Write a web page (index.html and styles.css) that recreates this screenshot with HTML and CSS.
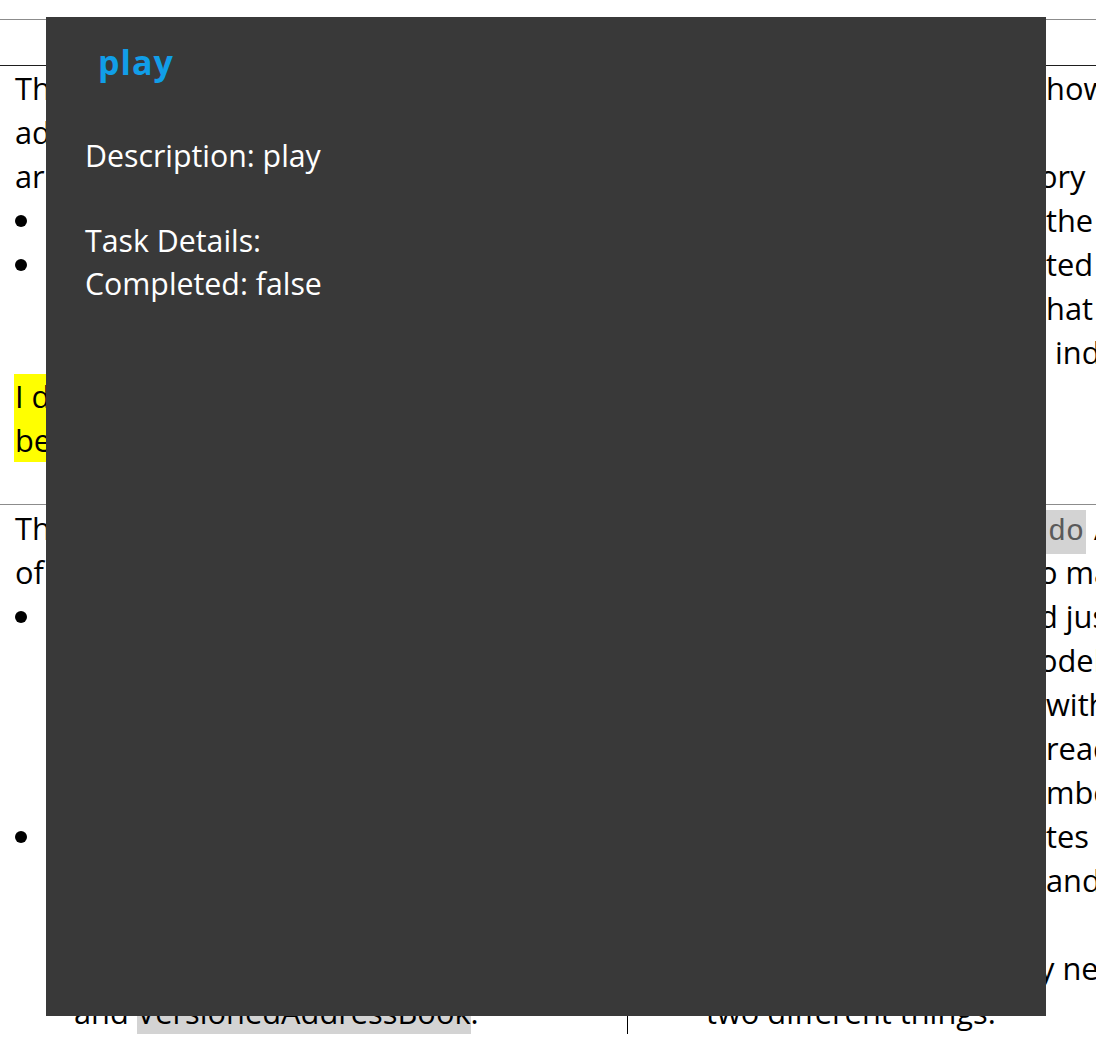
FILE: index.html
```html
<!DOCTYPE html>
<html lang="en">
<head>
<meta charset="utf-8">
<title>Task popup</title>
<link rel="stylesheet" href="styles.css">
</head>
<body>
<div class="doc">
  <div class="table">
    <div class="hrow"></div>

    <div class="row row1">
      <div class="cell left">
        <div class="ln">The Model stores the address book data in memory.</div>
        <div class="ln">address book and the task list are both held here and</div>
        <div class="ln">are exposed to the UI through unmodifiable lists:</div>
        <div class="ln b"><span class="dot"></span>UniqueTaskList stores all tasks of the app</div>
        <div class="ln b"><span class="dot"></span>Task objects hold a description and a flag that</div>
        <div class="ln ind">shows whether the task is completed.</div>
        <div class="ln"></div>
        <div class="ln"><span class="hl">I did not change the structure of the Model, as the task</span></div>
        <div class="ln"><span class="hl">behaves like any other entity in the address book.</span></div>
      </div>
      <div class="cell right">
        <div class="ln split"><span class="lead">The diagram below shows</span><span class="tail">how the Model is built</span></div>
        <div class="ln">It now also holds tasks.</div>
        <div class="ln split"><span class="lead">Each task keeps its own hist</span><span class="tail cut">ory</span></div>
        <div class="ln split"><span class="lead">and is stored inside</span><span class="tail">the</span></div>
        <div class="ln split"><span class="lead">tasks can be marked as comple</span><span class="tail">ted</span></div>
        <div class="ln split"><span class="lead">the UI reads the flag to show w</span><span class="tail">hat</span></div>
        <div class="ln split"><span class="lead">each task is shown with a colour</span><span class="tail gapped">indicating its state</span></div>
        <div class="ln"></div>
        <div class="ln"></div>
      </div>
    </div>

    <div class="row row2">
      <div class="cell left">
        <div class="ln">The Model also keeps a versioned copy</div>
        <div class="ln">of the address book for undo and redo.</div>
        <div class="ln b"><span class="dot"></span>VersionedAddressBook saves a state after</div>
        <div class="ln ind">every command that changes the data, so</div>
        <div class="ln ind">that the user can go back to an earlier</div>
        <div class="ln ind">state of the address book when a command</div>
        <div class="ln ind">was executed by mistake.</div>
        <div class="ln b"><span class="dot"></span>The task list is stored separately and is</div>
        <div class="ln ind">not part of the undo history, which keeps</div>
        <div class="ln ind">the design simple and avoids coupling</div>
        <div class="ln ind">between the task list</div>
        <div class="ln ind">and <span class="code-hl">VersionedAddressBook</span>.</div>
      </div>
      <div class="cell right">
        <div class="ln split"><span class="lead">The commands are handled by <span class="code">un</span></span><span class="tail"><span class="code">do</span> And redo</span></div>
        <div class="ln split"><span class="lead">which is used t</span><span class="tail cut">o make changes</span></div>
        <div class="ln split"><span class="lead">to the address book an</span><span class="tail cut">d just the book</span></div>
        <div class="ln split"><span class="lead">this keeps the c</span><span class="tail cut">odebase small</span></div>
        <div class="ln split"><span class="lead">and easy to work</span><span class="tail">with for everyone</span></div>
        <div class="ln split"><span class="lead">who needs to</span><span class="tail">read it later</span></div>
        <div class="ln split"><span class="lead">and reduces the nu</span><span class="tail">mber of bugs</span></div>
        <div class="ln split"><span class="lead">the command upda</span><span class="tail">tes State of the</span></div>
        <div class="ln split"><span class="lead">address book</span><span class="tail">and the list</span></div>
        <div class="ln"></div>
        <div class="ln split bline"><span class="lead"><span class="dot"></span>Tasks and contacts are what the</span><span class="tail cut">y need to store as</span></div>
        <div class="ln ind">two different things.</div>
      </div>
    </div>
  </div>
</div>

<div class="panel">
  <h1 class="title">play</h1>
  <div class="details">
    <p>Description: play</p>
    <p class="gap">Task Details:</p>
    <p>Completed: false</p>
  </div>
</div>
</body>
</html>
```

FILE: styles.css
```css
html, body {
  margin: 0;
  padding: 0;
  overflow: hidden;
  background: #ffffff;
}

body {
  width: 1096px;
  height: 1042px;
  position: relative;
  font-family: "Open Sans", "Noto Sans", sans-serif;
  color: #000000;
}

.doc {
  padding-top: 19px;
  width: 1500px;
}

.table {
  border-top: 1px solid #8c8c8c;
}

.hrow {
  height: 45px;
  border-bottom: 1px solid #1e1e1e;
}

.row {
  display: grid;
  grid-template-columns: 627px 1fr;
}

.row1 {
  height: 438px;
  border-bottom: 1px solid #8c8c8c;
}

.row2 {
  padding-top: 1px;
}

.cell.left {
  padding-left: 15px;
}

.cell.right {
  border-left: 1px solid #000000;
  padding-left: 14px;
}

.ln {
  height: 44px;
  line-height: 44px;
  font-size: 30.8px;
  white-space: nowrap;
}

.ln.b {
  display: flex;
  align-items: center;
}

.dot {
  flex: none;
  width: 12px;
  height: 12px;
  border-radius: 50%;
  background: #000000;
  margin-right: 47px;
  margin-top: 2px;
}

.ln.ind {
  padding-left: 59px;
}

.cell.right .ln.ind {
  padding-left: 64px;
}

.ln.split {
  display: grid;
  grid-template-columns: 404px max-content;
}

.lead {
  overflow: hidden;
  text-align: right;
}

.bline .lead {
  display: flex;
  align-items: center;
  justify-content: flex-end;
}

.tail.cut {
  margin-left: -7px;
}

.tail.gapped {
  padding-left: 9px;
}

.hl {
  display: inline-block;
  background: #ffff00;
  margin-left: -1px;
  padding-left: 1px;
}

.code-hl {
  display: inline-block;
  background: #d3d3d3;
}

.code {
  display: inline-block;
  background: #d3d3d3;
  font-family: "Liberation Mono", "DejaVu Sans Mono", monospace;
  font-size: 30px;
  color: #5a5a5a;
  padding-left: 2px;
  padding-right: 2px;
}

.panel {
  position: absolute;
  left: 46px;
  top: 17px;
  width: 1000px;
  height: 999px;
  box-sizing: border-box;
  padding: 25px 39px;
  background: #393939;
  color: #ffffff;
  font-family: "Open Sans", "Noto Sans", sans-serif;
}

.title {
  margin: 0 0 0 13px;
  font-size: 34px;
  font-weight: 700;
  letter-spacing: 1px;
  line-height: 40px;
  color: #119ee8;
}

.details {
  margin-top: 52px;
  font-size: 30.3px;
  line-height: 43px;
}

.details p {
  margin: 0;
}

.details .gap {
  margin-top: 42px;
}
```
